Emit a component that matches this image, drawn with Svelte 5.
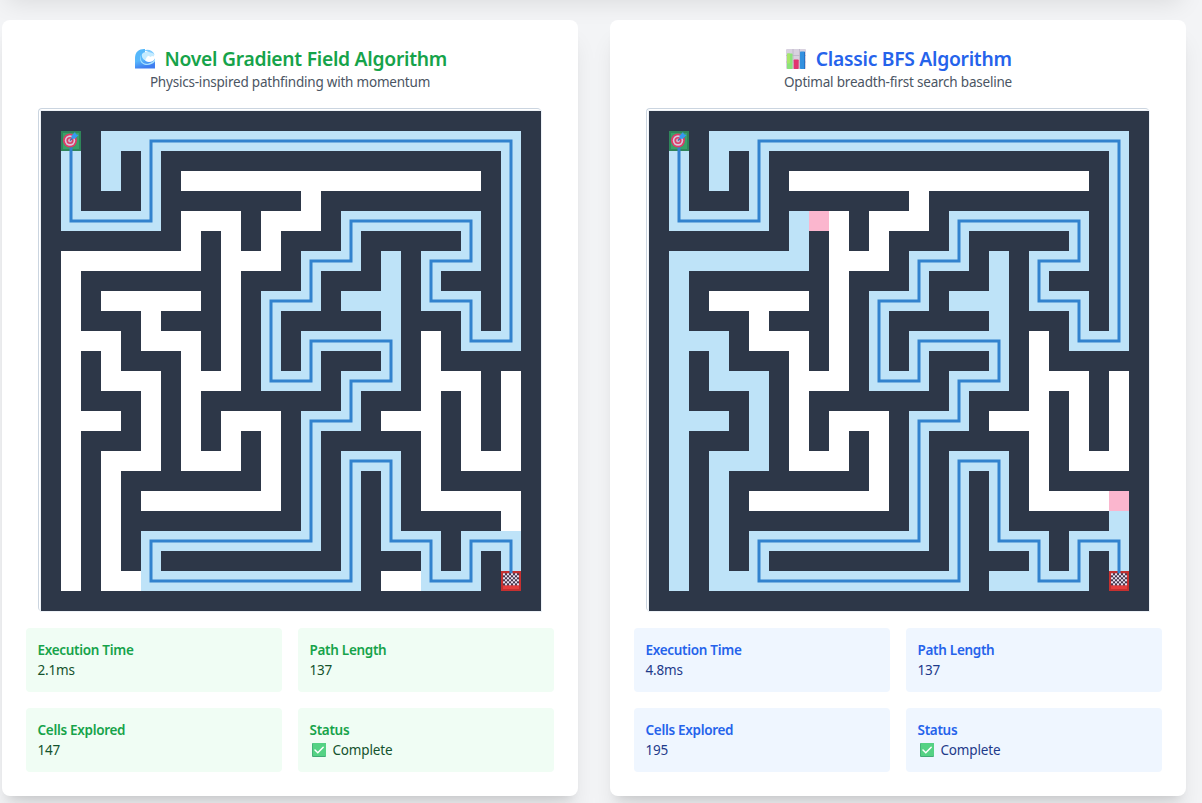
<script>
  const path = 'M1 1V5H5V1H23V11H21V9H19V7H21V5H15V7H13V9H11V13H13V11H17V13H15V15H13V21H5V23H15V17H17V21H19V23H21V21H23V23';
  const deadEnds = 'M3 3V1H5M17 7V11M15 9H17';
  const corridors =
    'M7 3H21M13 3V5H11V7H9M7 5H9V13H7M7 5V7H1V23M3 9H7M5 9V11H7V17H9V15H11V19H5' +
    'M1 11H3V13H5V17H3V23H5M1 15H3M19 11V19H23V21M17 15H19M19 13H21V17H23V13M17 23H19';
  const westBranch = 'M7 5V7H1V23M1 11H3V13H5V17H3V23H5M1 15H3M17 23H19M23 20V21';

  const panels = [
    {
      tone: 'green', icon: 'wave', title: 'Novel Gradient Field Algorithm',
      subtitle: 'Physics-inspired pathfinding with momentum',
      explored: deadEnds, frontier: [], time: '2.1ms', cells: '147'
    },
    {
      tone: 'blue', icon: 'chart', title: 'Classic BFS Algorithm',
      subtitle: 'Optimal breadth-first search baseline',
      explored: deadEnds + westBranch, frontier: [[8, 5], [23, 19]], time: '4.8ms', cells: '195'
    }
  ];
  const stats = (p) => [
    ['Execution Time', p.time], ['Path Length', '137'],
    ['Cells Explored', p.cells], ['Status', 'Complete']
  ];
  const checks = Array.from({ length: 48 }, (_, i) => [i % 8, Math.floor(i / 8)]).filter(([x, y]) => (x + y) % 2 === 0);
</script>

<div class="page">
  <div class="previous"></div>
  <div class="panels">
    {#each panels as p}
      <section class="card {p.tone}">
        <header>
          <h2>
            {#if p.icon === 'wave'}
              <svg class="emoji" viewBox="0 0 20 20">
                <defs>
                  <linearGradient id="sea" x1="0" y1="0" x2="0.3" y2="1">
                    <stop offset="0" stop-color="#52b7fa" /><stop offset=".6" stop-color="#58b8fc" /><stop offset="1" stop-color="#3f7df0" />
                  </linearGradient>
                </defs>
                <path d="M0 19.500V9C0 3 4 0 9 0c5 0 9 2 11 6v13.500Z" fill="url(#sea)" />
                <path d="M10 5.500C8 9 9.500 13 14 13c3 0 5-1.500 6-3.500V0H10Z" fill="#fff" />
                <path d="M6.500 5.500C4 11 8 16 13.500 14.500c3-.6 5.300-2.500 6.500-5v2.700c-3 4-9 5-12.500 2.300C4.500 12.500 4.500 8 6.500 5.500Z" fill="#a8e2ff" />
                <path d="M7 5c1.500-2 3.500-2.500 5-1.800 2-1 4-.8 5.500.3l2 2-.8 2-1.700-.5-1.500 1-2-1.300-1.500 1-1.800 3.500C7.500 10.500 6.500 7.500 7 5Z" fill="#c4ebff" />
                <path d="M9 1.300C13-.2 18 1.200 19.500 5.500L17.500 4 13 2.800Z" fill="#7dcaff" />
              </svg>
            {:else}
              <svg class="emoji" viewBox="0 0 20 20">
                <rect width="20" height="20" rx="1" fill="#d8d1df" />
                <path d="M0 6.500H20M0 13H20M7 0V20M13.500 0V20" stroke="#bcb4c5" stroke-width=".8" />
                <rect x="1" y="4.500" width="5.500" height="15.500" rx=".7" fill="#8be37b" />
                <rect x="1" y="4.500" width="3" height="10" rx=".7" fill="#a7e66b" />
                <rect x="7.700" y="10.500" width="5" height="9.500" rx=".7" fill="#e13570" />
                <rect x="14" y="2.500" width="5" height="17.500" rx=".7" fill="#3391df" />
                <path d="M18.500 3V20" stroke="#2473c5" />
              </svg>
            {/if}
            <span>{p.title}</span>
          </h2>
          <p>{p.subtitle}</p>
        </header>

        <div class="frame">
          <svg class="maze" viewBox="0 0 500 500">
            <rect width="500" height="500" fill="#2d3748" />
            <g transform="translate(10 10) scale(20)" fill="none" stroke-width="1" stroke-linecap="square">
              <path d={corridors} stroke="#fff" />
              <path d={p.explored} stroke="#bee3f8" />
              {#each p.frontier as [x, y]}
                <rect x={x - 0.5} y={y - 0.5} width="1" height="1" fill="#fbb6ce" />
              {/each}
              <path d={path} stroke="#bee3f8" />
            </g>
            <rect x="20" y="20" width="20" height="20" fill="#2f855a" />
            <rect x="22" y="22" width="16" height="16" fill="#38a169" />
            <rect x="460" y="460" width="20" height="20" fill="#c53030" />
            <rect x="462" y="462" width="16" height="16" fill="#e53e3e" />
            <path d={path} transform="translate(10 10) scale(20)" fill="none" stroke="#3182ce" stroke-width=".15" />
            <g transform="translate(21 22)">
              <circle cx="8" cy="7.500" r="7" fill="#dd3b68" />
              <circle cx="8" cy="7.500" r="5.200" fill="#d6c9dc" />
              <circle cx="8" cy="7.500" r="3.600" fill="#dd3b68" />
              <circle cx="8" cy="7.500" r="1.900" fill="#cbb7d0" />
              <path d="M8 7.500 12 3.700" stroke="#4b62a0" stroke-width="1.200" />
              <path d="M9.500 5.800V2.800L13-1l1 2.200 2.700.8-3.800 3.800Z" fill="#369af0" />
            </g>
            <g transform="translate(462 462.300)">
              <rect width="16" height="12" fill="#47384d" />
              {#each checks as [x, y]}
                <rect x={x * 2} y={y * 2} width="2" height="2" fill="#e8dfee" />
              {/each}
            </g>
          </svg>
        </div>

        <div class="stats">
          {#each stats(p) as [label, value]}
            <div class="stat">
              <div class="label">{label}</div>
              <div class="value">
                {#if label === 'Status'}
                  <svg class="check" viewBox="0 0 14 14">
                    <rect width="14" height="14" rx="1" fill="#42aa77" />
                    <rect x=".8" width="13.200" height="13" rx=".8" fill="#55d284" />
                    <path d="M3 7 5.800 9.800 11.200 4.300" fill="none" stroke="#fff" stroke-width="1.500" stroke-linecap="round" />
                  </svg>
                {/if}
                <span>{value}</span>
              </div>
            </div>
          {/each}
        </div>
      </section>
    {/each}
  </div>
</div>

<style>
  :global(body) { margin: 0; overflow: hidden; background: #f3f4f6; }
  * { box-sizing: border-box; }
  .page {
    display: flow-root; height: 803px; overflow: hidden; padding: 0 16px 0 2px; background: #f3f4f6;
    font-family: "Noto Sans", "Open Sans", sans-serif;
  }
  .previous, .card {
    background: #fff; border-radius: 8px;
    box-shadow: 0 20px 25px -5px rgba(0, 0, 0, .1), 0 8px 10px -6px rgba(0, 0, 0, .1);
  }
  .previous { height: 100px; margin-top: -112px; margin-bottom: 32px; }
  .panels { display: grid; grid-template-columns: 1fr 1fr; gap: 32px; }
  .card { height: 776px; padding: 24px; }
  header { height: 64px; text-align: center; }
  h2 {
    margin: 0; height: 28px; padding: 1px 0 0 2px;
    display: flex; align-items: center; justify-content: center; gap: 9.500px;
    font-size: 19.300px; font-weight: 600; line-height: 28px; letter-spacing: -.28px; white-space: nowrap;
  }
  .emoji { width: 20px; height: 20px; }
  p { margin: 0; font-size: 13.500px; line-height: 20px; letter-spacing: -.21px; color: #4b5563; white-space: nowrap; }
  .green h2, .green .label { color: #16a34a; }
  .blue h2, .blue .label { color: #2563eb; }
  .frame {
    width: 503px; height: 503px; margin: 0 0 0 12px; padding: 2px 0 0 2px;
    border: 0 solid #cbd5e0; border-width: 1px 0 0 1px; border-radius: 4px;
  }
  .maze { display: block; width: 500px; height: 500px; box-shadow: 0 0 0 1px #edf2f7; }
  .stats { margin-top: 17px; display: grid; grid-template-columns: 1fr 1fr; gap: 16px; }
  .stat { height: 64px; padding: 12px 11.500px; border-radius: 4px; font-size: 13.500px; line-height: 20px; letter-spacing: -.17px; }
  .green .stat { background: #f0fdf4; color: #14532d; }
  .blue .stat { background: #eff6ff; color: #1e3a8a; }
  .label { font-weight: 600; letter-spacing: -.3px; }
  .value { display: flex; align-items: center; }
  .check { width: 14px; height: 14px; margin: 0 7px 0 2px; }
</style>
